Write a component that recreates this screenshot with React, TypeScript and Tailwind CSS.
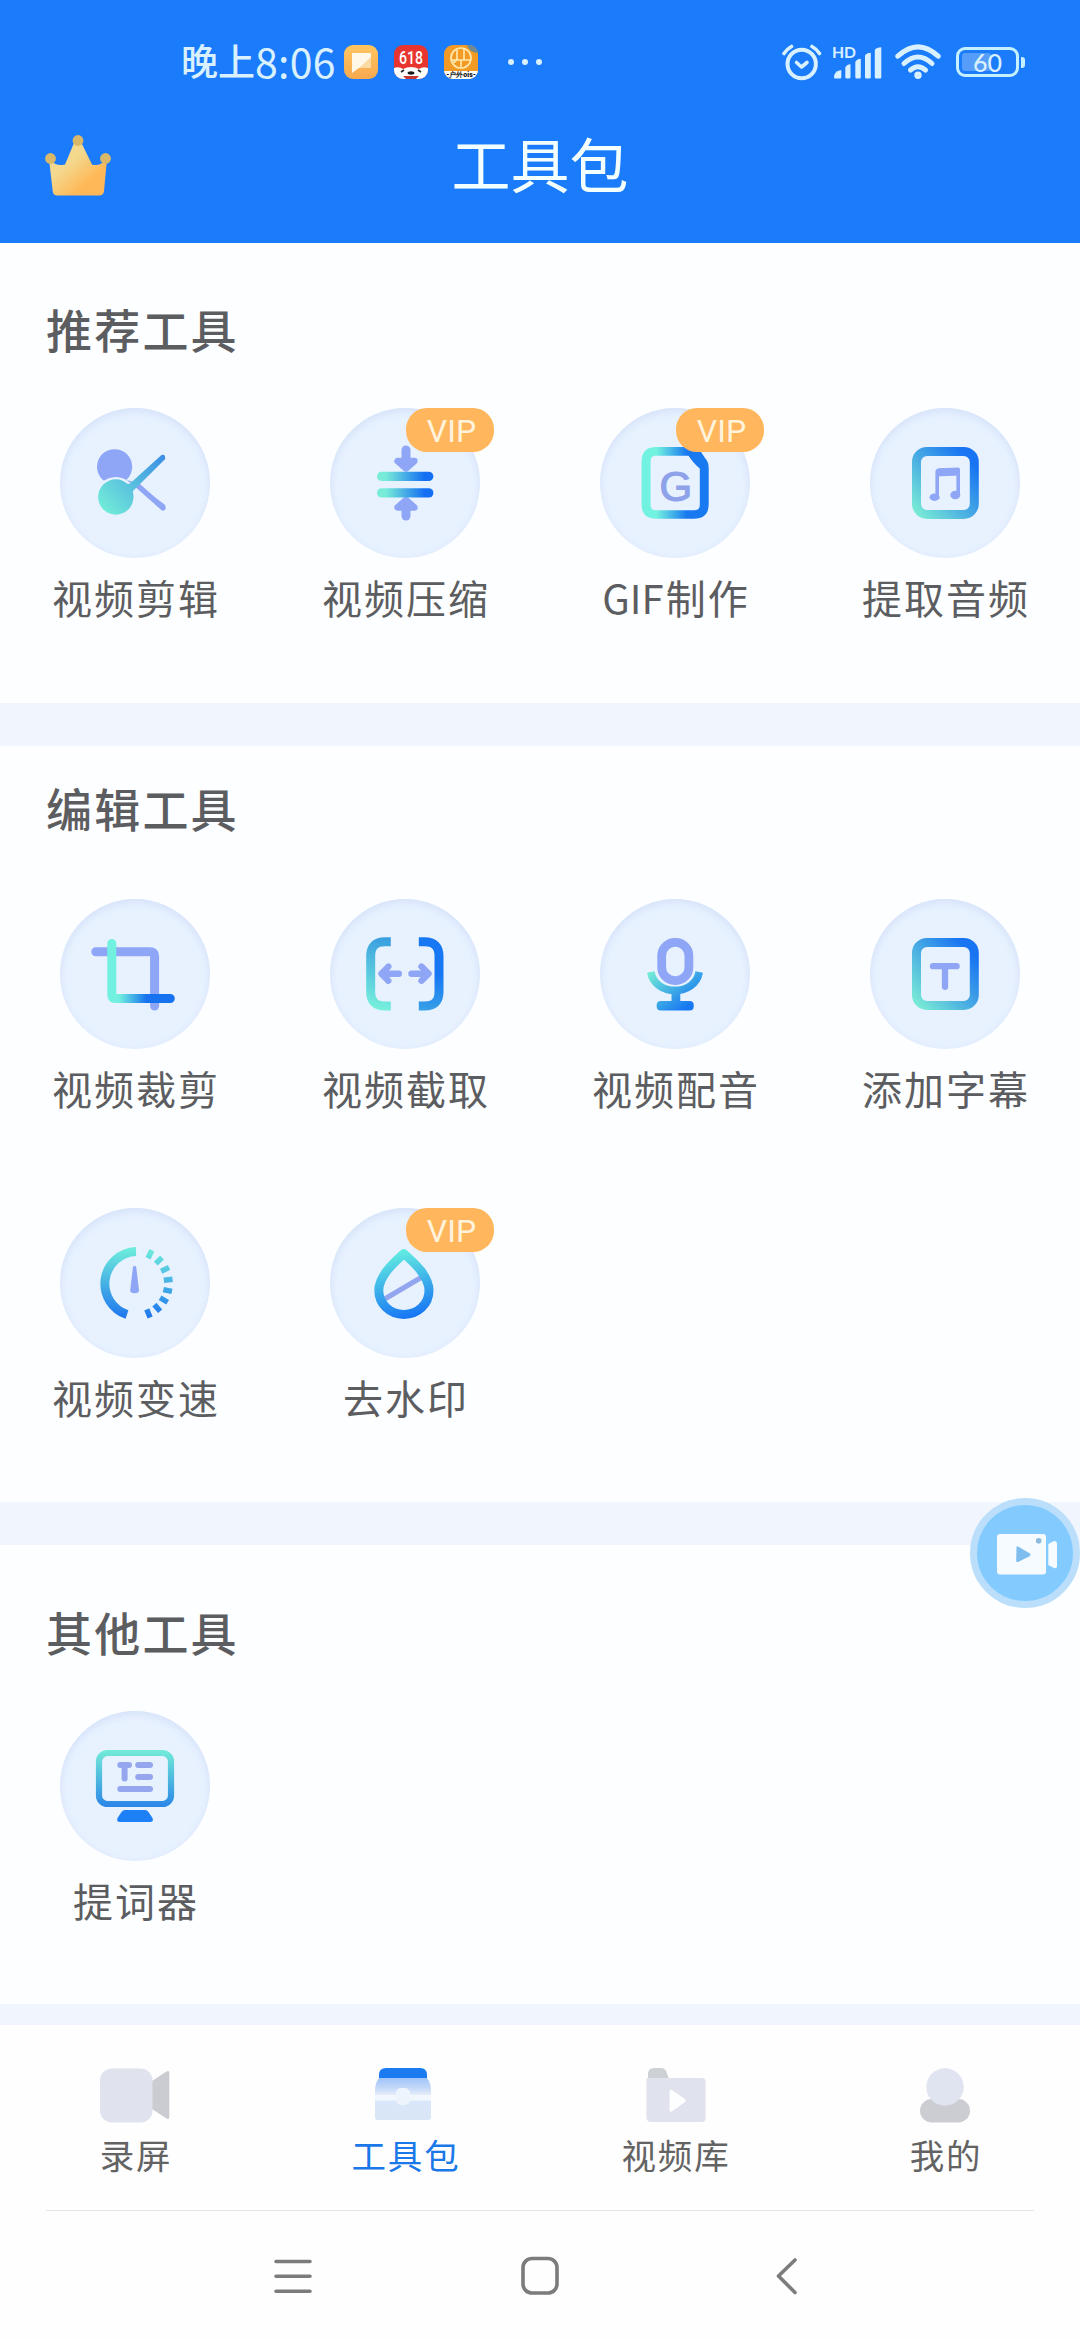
import React from "react";

const PURPLE = "#8ea6f5";

function Gradient({ id, from = "#6df0dc", to = "#1879f2", x1 = 0, y1 = 0, x2 = 1, y2 = 0, a = 0, b = 1 }: {
  id: string; from?: string; to?: string; x1?: number; y1?: number; x2?: number; y2?: number; a?: number; b?: number;
}) {
  return (
    <linearGradient id={id} x1={x1} y1={y1} x2={x2} y2={y2} gradientUnits="userSpaceOnUse">
      <stop offset={a} stopColor={from} />
      <stop offset={b} stopColor={to} />
    </linearGradient>
  );
}

function ScissorsIcon() {
  return (
    <>
      <defs>
        <Gradient id="sc" x1={44} y1={104} x2={106} y2={46} from="#72ecd8" to="#3a8be6" />
      </defs>
      <circle cx="54.6" cy="58.8" r="17.6" fill={PURPLE} />
      <path d="M63 71 L74 74 L104.6 96.5 a3 3 0 0 1 -2.4 5 L76 78 Z" fill={PURPLE} />
      <path d="M76 76 L103 100" stroke={PURPLE} strokeWidth="5.2" strokeLinecap="round" />
      <circle cx="55.8" cy="89" r="20" fill="#e8f2ff" />
      <circle cx="55.8" cy="89" r="17.7" fill="url(#sc)" />
      <path d="M62 77 L70 75.5 L101.5 47 Q105.5 45.5 105.2 51 L76 80 Q73 82 72 86 Z" fill="url(#sc)" />
    </>
  );
}

function CompressIcon() {
  return (
    <>
      <defs>
        <Gradient id="cp" x1={47} x2={103} from="#78ecd8" to="#146ff2" a={0.15} b={0.85} />
      </defs>
      <g fill={PURPLE} stroke={PURPLE} strokeLinejoin="round" strokeLinecap="round">
        <path d="M76 42 V52" strokeWidth="9" />
        <path d="M76 60.5 L67.5 53 H84.5 Z" strokeWidth="6.4" />
        <path d="M76 108 V98" strokeWidth="9" />
        <path d="M76 92 L67.5 99.5 H84.5 Z" strokeWidth="6.4" />
      </g>
      <rect x="47" y="63.7" width="56.4" height="9.4" rx="4.7" fill="url(#cp)" />
      <rect x="47" y="80.2" width="56.4" height="9.4" rx="4.7" fill="url(#cp)" />
    </>
  );
}

function GifIcon() {
  return (
    <>
      <defs>
        <Gradient id="gf" x1={42} x2={108} from="#72f2e0" to="#1879f0" a={0.22} b={0.68} />
      </defs>
      <path
        fill="url(#gf)"
        fillRule="evenodd"
        d="M56 39 H90 Q97 39 101 44 L105 50 Q108.7 54 108.7 60 V96 Q108.7 110.7 94 110.7 H56 Q41.5 110.7 41.5 96 V54 Q41.5 39 56 39 Z M56 47.8 Q50.6 47.8 50.6 53 V97 Q50.6 102.2 56 102.2 H94.5 Q99.8 102.2 99.8 97 V60.5 Q94 56 88.5 47.8 Z"
      />
      <text x="75.8" y="93" textAnchor="middle" className="font-['Liberation_Sans'] text-[42px]" fill="#8ea2ea" stroke="#8ea2ea" strokeWidth="1.2">G</text>
    </>
  );
}

function Frame({ id }: { id: string }) {
  return (
    <>
      <defs>
        <linearGradient id={id} x1="40" y1="102" x2="104" y2="44" gradientUnits="userSpaceOnUse">
          <stop offset="0.05" stopColor="#76e8d6" />
          <stop offset="0.5" stopColor="#46a8e4" />
          <stop offset="0.9" stopColor="#1874f2" />
        </linearGradient>
      </defs>
      <rect x="46.5" y="43.4" width="57.8" height="63" rx="10.5" fill="none" stroke={`url(#${id})`} strokeWidth="9" />
    </>
  );
}

function MusicIcon() {
  return (
    <>
      <Frame id="mu" />
      <path d="M67.2 89 V64 Q67.2 62 70 62 L88.2 61.3 V86" fill="none" stroke={PURPLE} strokeWidth="3.6" strokeLinejoin="round" />
      <path d="M66 68.5 V64 Q66 60.8 70 60.6 L86 60 Q90 60 90 64 V67.6 Z" fill={PURPLE} />
      <ellipse cx="64.6" cy="89.2" rx="5" ry="3.7" fill={PURPLE} />
      <ellipse cx="85.3" cy="87" rx="5" ry="4.2" fill={PURPLE} />
    </>
  );
}

function CropIcon() {
  return (
    <>
      <defs>
        <Gradient id="cr" x1={52} x2={110} from="#72f0e0" to="#1672ee" a={0.12} b={0.6} />
      </defs>
      <path d="M35.8 52.7 H90 Q94.6 52.7 94.6 57 V107" fill="none" stroke={PURPLE} strokeWidth="9" strokeLinecap="round" />
      <path d="M51.8 44.5 V96 Q51.8 99.5 55 99.5 H110.3" fill="none" stroke="url(#cr)" strokeWidth="9" strokeLinecap="round" />
    </>
  );
}

function CutIcon() {
  return (
    <>
      <defs>
        <Gradient id="ct1" x1={40} y1={108} x2={56} y2={40} from="#76f0dc" to="#3a9fe0" />
        <Gradient id="ct2" x1={96} y1={112} x2={106} y2={50} from="#38a0e6" to="#1878f4" a={0} b={0.6} />
      </defs>
      <path d="M60.8 42.8 H55 Q40.7 42.8 40.7 57 V93 Q40.7 107 55 107 H60.8" fill="none" stroke="url(#ct1)" strokeWidth="9" />
      <path d="M88.8 42.8 H94.5 Q109 42.8 109 57 V93 Q109 107 94.5 107 H88.8" fill="none" stroke="url(#ct2)" strokeWidth="9" />
      <g fill="none" stroke={PURPLE} strokeWidth="6.4" strokeLinecap="round" strokeLinejoin="round">
        <path d="M68.8 74.7 H52" />
        <path d="M58.3 67.6 L51.5 74.7 L58.3 81.8" />
        <path d="M81.5 74.7 H98" />
        <path d="M91.5 67.6 L98.5 74.7 L91.5 81.8" />
      </g>
    </>
  );
}

function MicIcon() {
  return (
    <>
      <defs>
        <Gradient id="mc" x1={52} y1={72} x2={82} y2={112} from="#72ecd6" to="#1678f2" />
      </defs>
      <rect x="61.7" y="43.4" width="27.2" height="38.2" rx="13.2" fill="none" stroke={PURPLE} strokeWidth="8.8" />
      <path d="M50.8 73 C55 97.5 95 97.5 99.2 73" fill="none" stroke="url(#mc)" strokeWidth="7.6" />
      <path d="M71.5 92 H80.3 V102 H71.5 Z" fill="url(#mc)" />
      <rect x="56.7" y="102" width="37" height="9.6" rx="4" fill="url(#mc)" />
    </>
  );
}

function SubtitleIcon() {
  return (
    <>
      <Frame id="sb" />
      <path d="M63 67.2 H86.6" stroke={PURPLE} strokeWidth="6.3" strokeLinecap="round" />
      <path d="M75 68 V87.8" stroke={PURPLE} strokeWidth="6.3" strokeLinecap="round" />
    </>
  );
}

function SpeedIcon() {
  const ticks = [-64.5, -45, -26, -6.7, 12.5, 30.7, 49, 67.4];
  return (
    <>
      <defs>
        <Gradient id="sp" x1={70} y1={42} x2={70} y2={110} from="#6ceadc" to="#1f76ee" />
      </defs>
      <path d="M76 43.4 A32.4 32.4 0 0 0 67 106.5" fill="none" stroke="url(#sp)" strokeWidth="9" />
      {ticks.map((deg) => {
        const r = (deg * Math.PI) / 180;
        return (
          <path
            key={deg}
            d={`M${76 + 28 * Math.cos(r)} ${75.5 + 28 * Math.sin(r)} L${76 + 36.8 * Math.cos(r)} ${75.5 + 36.8 * Math.sin(r)}`}
            stroke="url(#sp)"
            strokeWidth="5.4"
          />
        );
      })}
      <path d="M73 59 Q74.6 56.5 76.2 59 L79 82 Q79 85.3 74.6 85.3 Q70.2 85.3 70.2 82 Z" fill={PURPLE} />
    </>
  );
}

function DropIcon() {
  return (
    <>
      <defs>
        <Gradient id="dr" x1={66} y1={42} x2={82} y2={110} from="#64efe0" to="#1674f4" />
      </defs>
      <path d="M53 92 L92 69" stroke="#92a6f0" strokeWidth="5" />
      <path d="M73.8 45.6 C82 53 99 67 99 82.5 C99 96 88 106.4 73.8 106.4 C60 106.4 48.8 96 48.8 82.5 C48.8 67 66 53 73.8 45.6 Z" fill="none" stroke="url(#dr)" strokeWidth="9" strokeLinejoin="round" />
    </>
  );
}

function PrompterIcon() {
  return (
    <>
      <defs>
        <Gradient id="pr" x1={70} y1={40} x2={70} y2={96} from="#72ead8" to="#2a86e8" />
      </defs>
      <rect x="39" y="42" width="72" height="51" rx="8.5" fill="none" stroke="url(#pr)" strokeWidth="6.2" />
      <g stroke="#95a6ef" strokeWidth="6" strokeLinecap="round">
        <path d="M60.3 54 H69" />
        <path d="M64.6 55 V67.5" />
        <path d="M78.2 54 H90" />
        <path d="M78.2 66 H90" />
        <path d="M60.3 78 H90" />
      </g>
      <path d="M65 99 H85 Q87 99 88.5 101 L92.5 107 Q94 111 90 111 H60 Q56 111 57.5 107 L61.5 101 Q63 99 65 99 Z" fill="#1d80f6" />
    </>
  );
}

type ToolDef = { label: string; icon: React.ReactNode; vip?: boolean };

function Tool({ label, icon, vip }: ToolDef) {
  return (
    <div className="flex flex-col items-center">
      <div className="relative size-[150px] rounded-full bg-[#e8f2ff] shadow-[inset_0_3px_9px_rgba(180,198,238,0.4)]">
        <svg viewBox="0 0 150 150" className="size-[150px]">{icon}</svg>
        {vip && (
          <div className="absolute left-[76px] top-0 flex h-11 w-[88px] items-center justify-center rounded-[21px] bg-[#ffb65c] pl-[3px] pt-px font-['Roboto'] text-[32px] text-[#fff3dc]">
            VIP
          </div>
        )}
      </div>
      <div className="mb-[2px] mt-[15px] h-12 whitespace-nowrap pl-[2px] text-[40px] leading-[48px] tracking-[2px] text-[#5c5d60]">
        {label.startsWith("GIF") ? <><span className="pr-[2px] tracking-normal">GIF</span>{label.slice(3)}</> : label}
      </div>
    </div>
  );
}

function Section({ title, tools, className, gridClassName }: { title: string; tools: ToolDef[]; className: string; gridClassName: string }) {
  return (
    <section className={`bg-[#fcfeff] ${className}`}>
      <h2 className="pl-[46px] text-[46px] font-medium leading-[60px] tracking-[2.2px] text-[#5c5d60]">{title}</h2>
      <div className={`grid grid-cols-4 gap-y-[94px] ${gridClassName}`}>
        {tools.map((t) => <Tool key={t.label} {...t} />)}
      </div>
    </section>
  );
}

function StatusBar() {
  return (
    <div className="flex h-[124px] items-center text-[#d9f0ff]">
      <div className="mb-1 ml-[181px] flex w-[163px] items-center whitespace-nowrap leading-[60px]">
        <span className="text-[37px] font-medium">晚上</span>
        <span className="text-[41px] tracking-[0.3px]">8:06</span>
      </div>
      <svg viewBox="0 0 34 34" className="size-[34px]">
        <defs><Gradient id="a1" x1={0} y1={0} x2={0} y2={34} from="#ffc55f" to="#f7a94f" /></defs>
        <rect width="34" height="34" rx="9" fill="url(#a1)" />
        <path d="M8 8 H27 V17 L20 23 H15 L8 28 Z" fill="#fff8e8" />
        <path d="M27 12 V23 H15 Z" fill="#fbd9a2" />
      </svg>
      <svg viewBox="0 0 34 34" className="ml-[15.6px] size-[34px] overflow-visible">
        <defs><clipPath id="jd"><rect width="34" height="34" rx="9" /></clipPath></defs>
        <g clipPath="url(#jd)">
          <rect width="34" height="34" fill="#e8352f" />
          <path d="M0 23 Q5 21 9 24 Q17 20 25 24 Q29 21 34 23 V34 H0 Z" fill="#ffffff" />
          <path d="M7 27 L10 25 M27 27 L24 25" stroke="#222" strokeWidth="1.6" />
          <ellipse cx="17" cy="28" rx="3.4" ry="1.7" fill="#1a1a1a" />
          <path d="M9 31 H25 L22 34 H12 Z" fill="#c93632" />
        </g>
        <text x="17" y="18.5" textAnchor="middle" className="font-['Roboto'] text-[18px] font-medium" textLength="24" lengthAdjust="spacingAndGlyphs" fill="#fff">618</text>
      </svg>
      <svg viewBox="0 0 34 34" className="ml-[16px] size-[34px] overflow-visible">
        <defs><clipPath id="pt"><rect width="34" height="34" rx="9" /></clipPath></defs>
        <g clipPath="url(#pt)">
          <rect width="34" height="34" fill="#f39a25" />
          <path d="M23 0 H34 V8 Q25 7 23 0 Z" fill="#6f8a90" />
          <rect y="26" width="34" height="8" fill="#fff" />
        </g>
        <circle cx="17" cy="13" r="10" fill="none" stroke="#ffe9b0" strokeWidth="1.7" />
        <path d="M13 5 V12 Q13 17 8 18 M20 4 V15 M13 9 V15 H26 M8 15 H13 M17 15 V22" fill="none" stroke="#ffe9b0" strokeWidth="1.6" />
        <text x="17" y="32.2" textAnchor="middle" className="font-['Roboto'] text-[7px] font-black" fill="#111">-户外ois-</text>
      </svg>
      <div className="ml-[30px] flex gap-[7.6px]">
        <i className="size-[6.4px] rounded-full bg-[#d9f0ff]" />
        <i className="size-[6.4px] rounded-full bg-[#d9f0ff]" />
        <i className="size-[6.4px] rounded-full bg-[#d9f0ff]" />
      </div>
      <svg viewBox="0 0 40 38" className="ml-auto h-[38px] w-10" fill="none" stroke="#d9f0ff" strokeLinecap="round" strokeLinejoin="round">
        <circle cx="19.7" cy="21" r="14.2" strokeWidth="4" />
        <path d="M14.5 19.5 L19.5 24 L25 19.5" strokeWidth="3.6" />
        <path d="M2 10.5 Q5 6 9.5 3.500 M37.500 10.500 Q34.500 6 30 3.500" strokeWidth="3.600" />
      </svg>
      <svg viewBox="0 0 52 36" className="ml-[10.5px] h-9 w-[52px] overflow-visible" fill="#d9f0ff">
        <text x="0" y="14.4" className="font-['Lato'] text-[16px] font-bold" textLength="24" lengthAdjust="spacingAndGlyphs">HD</text>
        <path d="M3 34.5 Q2 34.5 2 33 Q2 28 8 26.3 H9.3 V33 Q9.3 34.5 8 34.5 Z" />
        <path d="M13.3 23.5 Q14.5 20.5 18.5 20.3 V33 Q18.5 34.5 17 34.5 H14.5 Q13.3 34.5 13.3 33 Z" />
        <path d="M23.3 18 Q24.5 15 28.8 14.8 V33 Q28.8 34.5 27.5 34.5 H24.5 Q23.3 34.5 23.3 33 Z" />
        <path d="M33 11.5 Q34.5 9 38.8 8.8 V33 Q38.8 34.5 37.5 34.5 H34.3 Q33 34.5 33 33 Z" />
        <path d="M42.8 6 Q44.5 3.5 49.3 3.3 V33 Q49.3 34.5 48 34.5 H44 Q42.8 34.5 42.8 33 Z" />
      </svg>
      <svg viewBox="0 0 46 36" className="ml-[11px] h-9 w-[46px]" fill="none" stroke="#d9f0ff" strokeLinecap="round" strokeWidth="5">
        <path d="M2.8 12.2 Q23 -6.5 43.2 12.2" />
        <path d="M9 19.5 Q23 6.5 37 19.5" />
        <path d="M15.5 26 Q23 19.5 30.5 26" />
        <circle cx="23" cy="31.2" r="1.7" strokeWidth="4" />
      </svg>
      <div className="ml-[15px] flex items-center">
        <div className="relative flex h-[30px] w-[63px] items-center justify-center rounded-[9px] border-[3.4px] border-[#c4f0ff] font-['Lato'] text-[25px] leading-[24px] text-[#d9f0ff]">
          <div className="absolute left-[3px] top-[3px] h-[18px] w-[29px] rounded-[3px] bg-[#559df8]" />
          <span className="relative font-medium">60</span>
        </div>
        <i className="ml-[2px] h-[11px] w-1 rounded-r-[3px] bg-[#c4f0ff]" />
      </div>
      <div className="w-[55px]" />
    </div>
  );
}

function Header() {
  return (
    <header className="h-[243px] bg-[#1a7bfb]">
      <StatusBar />
      <div className="grid h-[78px] grid-cols-[1fr_auto_1fr] items-center">
        <svg viewBox="0 0 68 64" className="ml-[44px] mt-[3px] h-16 w-[68px]">
          <defs>
            <Gradient id="cw" x1={18} y1={12} x2={58} y2={58} from="#f3d88e" to="#ffb857" a={0.3} b={0.75} />
          </defs>
          <path d="M5 26 Q12 34 21 31.5 L30 10 Q34 6 37.5 10 L48 31.5 Q56 34 63 26 L60 58 Q59.5 62.5 55 62.5 H13.5 Q9 62.5 8.7 58 Z" fill="url(#cw)" />
          <g fill="#d9b86a">
            <circle cx="34" cy="7.5" r="5.4" />
            <circle cx="6.5" cy="25.5" r="5.4" />
            <circle cx="61.5" cy="25.5" r="5.4" />
          </g>
        </svg>
        <h1 className="text-[59px] leading-[78px] text-[#f3ffff]">工具包</h1>
      </div>
    </header>
  );
}

function FloatingRecorder() {
  return (
    <div className="absolute left-[970px] top-[1498px] size-[110px] rounded-full border-[7px] border-[#bbdffb] bg-[#83cbff]">
      <svg viewBox="0 0 96 96" className="size-24">
        <rect x="20" y="29" width="49" height="40.5" rx="3" fill="#f6fbff" />
        <path d="M39.5 42.5 Q39 41 41 41.5 L53 48.5 Q54 50 53 51 L41 57 Q39.2 57.5 39.2 55.5 Z" fill="#7dbdf0" />
        <circle cx="61.7" cy="35.8" r="2.8" fill="#8cb9de" />
        <path d="M71.3 39 L77 36 Q80 35.5 80 38.5 V61 Q80 64 77 63 L71.3 60 Z" fill="#f6fbff" />
      </svg>
    </div>
  );
}

function TabBar() {
  return (
    <nav className="flex h-[186px] flex-col bg-[#fefefe] text-[34.5px] text-[#636363]">
      <div className="grid grid-cols-4 pt-[42px]">
        <Tab label="录屏">
          <path d="M57 14 L71.500 4.500 Q74.300 3 74.300 6 V50 Q74.300 53 71.500 51.500 L57 42 Z" fill="#cbccd2" />
          <rect x="5" y="1.5" width="52.500" height="54" rx="12" fill="#e0e2ee" />
        </Tab>
        <Tab label="工具包" active>
          <defs>
            <linearGradient id="bx" x1="0" y1="10" x2="0" y2="53" gradientUnits="userSpaceOnUse">
              <stop offset="0" stopColor="#9cc2fb" />
              <stop offset="0.25" stopColor="#c3d8f8" />
              <stop offset="0.4" stopColor="#e2eaf9" />
              <stop offset="0.43" stopColor="#f1f7fc" />
              <stop offset="0.53" stopColor="#f1f7fc" />
              <stop offset="0.57" stopColor="#d8e7f9" />
              <stop offset="1" stopColor="#d9e6f6" />
            </linearGradient>
          </defs>
          <path d="M14 11 H62 Q66 16 66 24 V50 Q66 53 63 53 H13 Q10 53 10 50 V24 Q10 16 14 11 Z" fill="url(#bx)" />
          <path d="M14 11 V8 Q14 1 21 1 H55 Q62 1 62 8 V11 Z" fill="#1b7cf2" />
          <rect x="31" y="21" width="14" height="17" rx="5" fill="#edf4fb" />
        </Tab>
        <Tab label="视频库">
          <path d="M13 12 V7 Q13 1 19 1 H26 Q30 1 31.5 5 L34 12 Z" fill="#cdd1d6" />
          <path d="M11.4 11 H67 Q70.6 11 70.6 15 V51 Q70.6 55 67 55 H16 Q11.4 55 11.4 50 Z" fill="#e0e3ed" />
          <path d="M34.5 24.5 Q35 22 37 23 L50 32 Q51.5 33.5 50 35 L37 44.5 Q34.5 45.5 34.5 43 Z" fill="#fdfeff" />
        </Tab>
        <Tab label="我的">
          <rect x="15" y="32" width="50" height="23.5" rx="11.7" fill="#cbcdd2" />
          <circle cx="40" cy="20" r="18.7" fill="#e0e3f0" />
        </Tab>
      </div>
      <div className="mx-[46px] mt-auto h-px bg-[#e4e4e4]" />
    </nav>
  );
}

function Tab({ label, active, children }: { label: string; active?: boolean; children: React.ReactNode }) {
  return (
    <div className="flex flex-col items-center">
      <svg viewBox="0 0 80 56" className="h-14 w-20">{children}</svg>
      <span className={active ? "mt-[11px] pl-[2px] leading-10 tracking-[1.8px] text-[#1a78e8]" : "mt-[11px] pl-[2px] leading-10 tracking-[1.8px]"}>{label}</span>
    </div>
  );
}

function SystemNav() {
  return (
    <div className="flex h-[129px] items-center justify-center gap-[207px] bg-[#fefefe]">
      <svg viewBox="0 0 40 40" className="size-10" stroke="#7c7c7c" strokeWidth="3.6" strokeLinecap="round">
        <path d="M3 5.5 H37 M3 20.3 H37 M3 35.2 H37" />
      </svg>
      <svg viewBox="0 0 40 40" className="size-10" fill="none" stroke="#7c7c7c" strokeWidth="3.6">
        <rect x="3" y="2.5" width="34" height="34.5" rx="9" />
      </svg>
      <svg viewBox="0 0 40 40" className="size-10" fill="none" stroke="#7c7c7c" strokeWidth="3.6" strokeLinecap="round" strokeLinejoin="round">
        <path d="M28 4 L11.5 20 L28 36.5" />
      </svg>
    </div>
  );
}

const recommended: ToolDef[] = [
  { label: "视频剪辑", icon: <ScissorsIcon /> },
  { label: "视频压缩", icon: <CompressIcon />, vip: true },
  { label: "GIF制作", icon: <GifIcon />, vip: true },
  { label: "提取音频", icon: <MusicIcon /> },
];

const editing: ToolDef[] = [
  { label: "视频裁剪", icon: <CropIcon /> },
  { label: "视频截取", icon: <CutIcon /> },
  { label: "视频配音", icon: <MicIcon /> },
  { label: "添加字幕", icon: <SubtitleIcon /> },
  { label: "视频变速", icon: <SpeedIcon /> },
  { label: "去水印", icon: <DropIcon />, vip: true },
];

const others: ToolDef[] = [{ label: "提词器", icon: <PrompterIcon /> }];

export default function App() {
  return (
    <div className="relative flex h-[2340px] w-[1080px] flex-col overflow-hidden bg-[#f1f5fd] font-['Noto_Sans_CJK_SC',sans-serif]">
      <Header />
      <main className="flex flex-1 flex-col gap-[43px]">
        <Section title="推荐工具" tools={recommended} className="h-[460px] pt-[55px]" gridClassName="mt-[50px]" />
        <Section title="编辑工具" tools={editing} className="h-[756px] pt-[31px]" gridClassName="mt-[62px]" />
        <Section title="其他工具" tools={others} className="h-[459px] pt-[56px]" gridClassName="mt-[50px]" />
      </main>
      <TabBar />
      <SystemNav />
      <FloatingRecorder />
    </div>
  );
}
